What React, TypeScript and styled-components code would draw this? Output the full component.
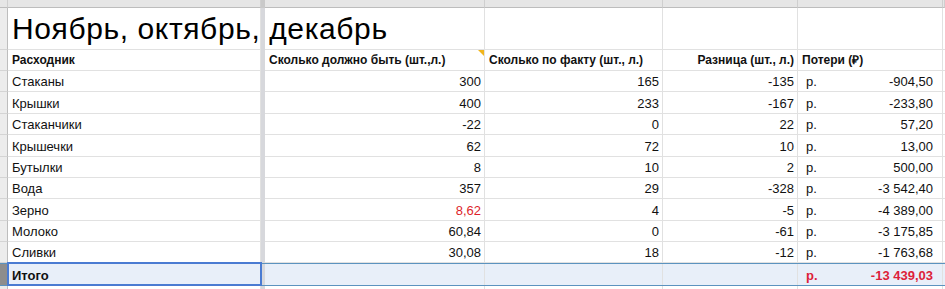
import React from "react";
import styled, { createGlobalStyle, css } from "styled-components";

const Global = createGlobalStyle`
  html, body { margin: 0; padding: 0; background: #ffffff; }
  body { font-family: "Liberation Sans", Arial, sans-serif; color: #111; }
`;

const COLS = "8px 253px 4px 220px 178px 135px 145px 1fr";
const GRID = "#e1e1e1";

const Sheet = styled.div`
  width: 945px;
  height: 289px;
  overflow: hidden;
  display: flex;
  flex-direction: column;
  background: #fff;
`;

const Row = styled.div<{ $h: number; $selected?: boolean }>`
  display: grid;
  grid-template-columns: ${COLS};
  height: ${(p) => p.$h}px;
  flex: none;
  box-sizing: border-box;
  ${(p) =>
    p.$selected &&
    css`
      background: #e8eff9;
      border-top: 1px solid #5b93bf;
      border-bottom: 1px solid #5b93bf;
    `}
`;

const RowHead = styled.div<{ $active?: boolean }>`
  box-sizing: border-box;
  background: ${(p) => (p.$active ? "#8d8d8d" : "#ececec")};
  border-right: 1px solid #bdbdbd;
  border-bottom: 1px solid ${(p) => (p.$active ? "#8d8d8d" : "#d4d4d4")};
`;

const ColHead = styled.div`
  box-sizing: border-box;
  background: #e6e6e6;
  border-right: 1px solid #cfcfcf;
  border-bottom: 1px solid #bdbdbd;
`;

const Frozen = styled.div<{ $top?: boolean }>`
  background: ${(p) => (p.$top ? "#c9c9c9" : "#d7d8dc")};
`;

const Cell = styled.div<{
  $align?: "left" | "right";
  $bold?: boolean;
  $noLine?: boolean;
  $size?: number;
}>`
  position: relative;
  box-sizing: border-box;
  display: flex;
  align-items: flex-end;
  justify-content: ${(p) => (p.$align === "right" ? "flex-end" : "flex-start")};
  padding: 0 3px 2px 4px;
  border-right: 1px solid ${GRID};
  border-bottom: ${(p) => (p.$noLine ? "none" : `1px solid ${GRID}`)};
  font-size: ${(p) => p.$size ?? 13}px;
  line-height: 15px;
  font-weight: ${(p) => (p.$bold ? 700 : 400)};
  white-space: nowrap;
  min-width: 0;
`;

const TitleCell = styled(Cell)`
  align-items: center;
  padding: 0 0 0 4px;
  font-size: 30px;
  letter-spacing: 0.6px;
  line-height: 32px;
  overflow: visible;
  color: #000;
`;

const HeadCell = styled(Cell)`
  font-size: 12px;
  line-height: 14px;
  padding-bottom: 3px;
  font-weight: 700;
`;

const Note = styled.span`
  position: absolute;
  top: 0;
  right: 0;
  width: 0;
  height: 0;
  border-top: 6px solid #f1b51c;
  border-left: 6px solid transparent;
`;

const Money = styled(Cell)<{ $red?: boolean }>`
  justify-content: space-between;
  padding-left: 8px;
  padding-right: 9px;
  color: ${(p) => (p.$red ? "#dd1f3a" : "inherit")};
`;

const Num = styled.span<{ $red?: boolean }>`
  color: ${(p) => (p.$red ? "#dd1f2c" : "inherit")};
`;

const ActiveCell = styled(Cell)`
  &::after {
    content: "";
    position: absolute;
    top: -2px;
    left: -1px;
    right: -2px;
    bottom: -1px;
    border: 2px solid #4a7bd2;
    pointer-events: none;
  }
`;

type Item = {
  name: string;
  b: string;
  c: string;
  d: string;
  e: string;
  h: number;
  redB?: boolean;
};

const items: Item[] = [
  { name: "Стаканы", b: "300", c: "165", d: "-135", e: "-904,50", h: 21 },
  { name: "Крышки", b: "400", c: "233", d: "-167", e: "-233,80", h: 22 },
  { name: "Стаканчики", b: "-22", c: "0", d: "22", e: "57,20", h: 21 },
  { name: "Крышечки", b: "62", c: "72", d: "10", e: "13,00", h: 22 },
  { name: "Бутылки", b: "8", c: "10", d: "2", e: "500,00", h: 21 },
  { name: "Вода", b: "357", c: "29", d: "-328", e: "-3 542,40", h: 21 },
  { name: "Зерно", b: "8,62", c: "4", d: "-5", e: "-4 389,00", h: 22, redB: true },
  { name: "Молоко", b: "60,84", c: "0", d: "-61", e: "-3 175,85", h: 21 },
  { name: "Сливки", b: "30,08", c: "18", d: "-12", e: "-1 763,68", h: 21 },
];

export default function App() {
  return (
    <>
      <Global />
      <Sheet>
        <Row $h={8}>
          <ColHead />
          <ColHead />
          <Frozen $top />
          <ColHead />
          <ColHead />
          <ColHead />
          <ColHead />
          <ColHead />
        </Row>
        <Row $h={42}>
          <RowHead />
          <TitleCell>Ноябрь, октябрь, декабрь</TitleCell>
          <Frozen />
          <Cell />
          <Cell />
          <Cell />
          <Cell />
          <Cell />
        </Row>
        <Row $h={21}>
          <RowHead />
          <HeadCell>Расходник</HeadCell>
          <Frozen />
          <HeadCell>
            Сколько должно быть (шт.,л.)
            <Note />
          </HeadCell>
          <HeadCell>Сколько по факту (шт., л.)</HeadCell>
          <HeadCell $align="right">Разница (шт., л.)</HeadCell>
          <HeadCell>Потери (₽)</HeadCell>
          <Cell />
        </Row>
        {items.map((it) => (
          <Row $h={it.h} key={it.name}>
            <RowHead />
            <Cell>{it.name}</Cell>
            <Frozen />
            <Cell $align="right">
              <Num $red={it.redB}>{it.b}</Num>
            </Cell>
            <Cell $align="right">{it.c}</Cell>
            <Cell $align="right">{it.d}</Cell>
            <Money>
              <span>р.</span>
              <span>{it.e}</span>
            </Money>
            <Cell />
          </Row>
        ))}
        <Row $h={23} $selected>
          <RowHead $active />
          <ActiveCell $bold $noLine>
            Итого
          </ActiveCell>
          <Frozen />
          <Cell $noLine />
          <Cell $noLine />
          <Cell $noLine />
          <Money $noLine $bold $red>
            <span>р.</span>
            <span>-13 439,03</span>
          </Money>
          <Cell $noLine />
        </Row>
        <Row $h={10}>
          <RowHead />
          <Cell />
          <Frozen />
          <Cell />
          <Cell />
          <Cell />
          <Cell />
          <Cell />
        </Row>
      </Sheet>
    </>
  );
}
